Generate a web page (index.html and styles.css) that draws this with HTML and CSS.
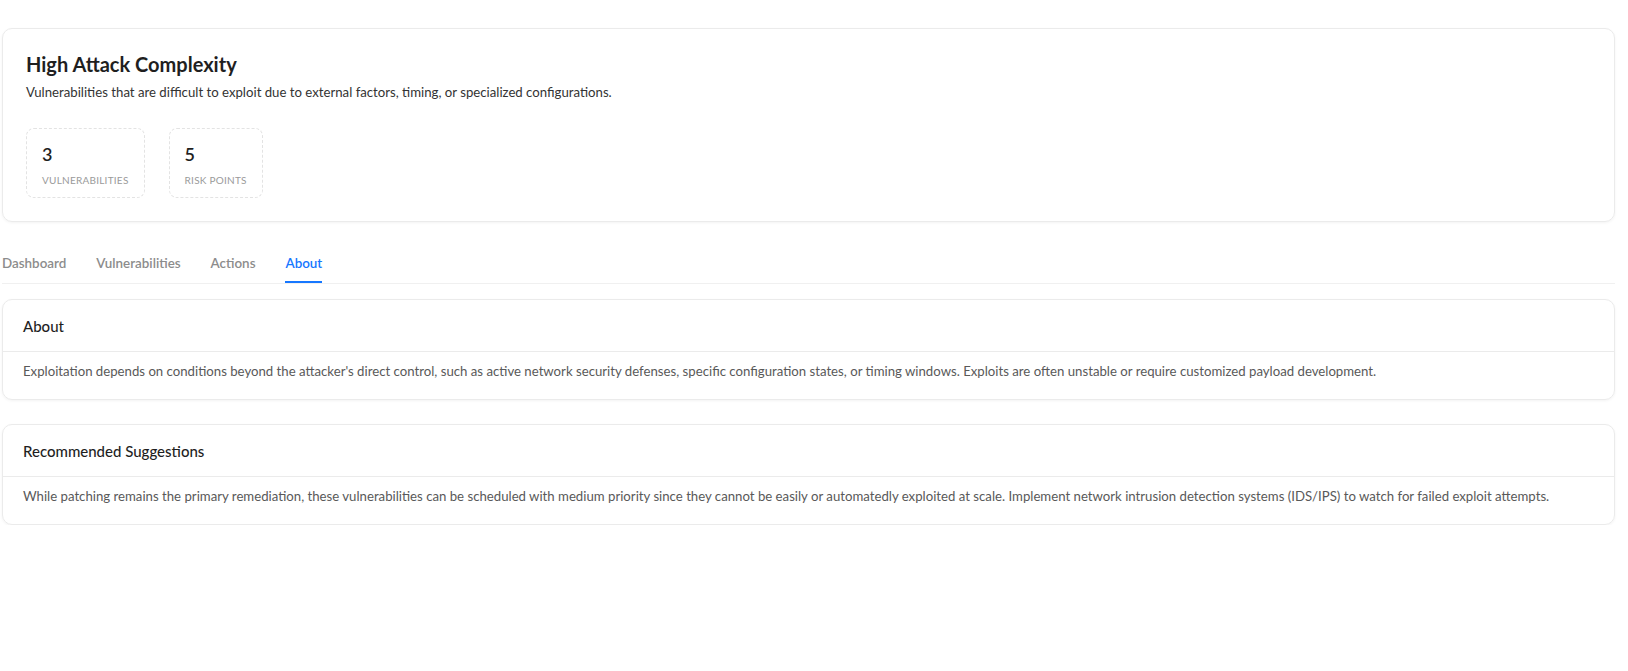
FILE: index.html
```html
<!DOCTYPE html>
<html lang="en">
<head>
    <meta charset="UTF-8">
    <meta name="viewport" content="width=device-width, initial-scale=1.0">
    <title>High Attack Complexity</title>
    <link rel="stylesheet" href="styles.css">
</head>
<body>
    <div class="page">
        <!-- Resumen de la categoria -->
        <section class="summary-card">
            <h1 class="summary-title">High Attack Complexity</h1>
            <p class="summary-text">Vulnerabilities that are difficult to exploit due to external factors, timing, or specialized configurations.</p>
            <div class="stats">
                <div class="stat-box">
                    <div class="stat-value">3</div>
                    <div class="stat-label">Vulnerabilities</div>
                </div>
                <div class="stat-box">
                    <div class="stat-value">5</div>
                    <div class="stat-label">Risk Points</div>
                </div>
            </div>
        </section>

        <!-- Pestanas -->
        <nav class="tabs">
            <a href="#" class="tab">Dashboard</a>
            <a href="#" class="tab">Vulnerabilities</a>
            <a href="#" class="tab">Actions</a>
            <a href="#" class="tab active">About</a>
        </nav>

        <section class="info-card">
            <div class="info-head">About</div>
            <div class="info-body">Exploitation depends on conditions beyond the attacker's direct control, such as active network security defenses, specific configuration states, or timing windows. Exploits are often unstable or require customized payload development.</div>
        </section>

        <section class="info-card">
            <div class="info-head">Recommended Suggestions</div>
            <div class="info-body">While patching remains the primary remediation, these vulnerabilities can be scheduled with medium priority since they cannot be easily or automatedly exploited at scale. Implement network intrusion detection systems (IDS/IPS) to watch for failed exploit attempts.</div>
        </section>
    </div>
</body>
</html>
```

FILE: styles.css
```css
html, body {
    margin: 0;
    padding: 0;
    background: #fff;
    font-family: 'Segoe UI', 'Lato', sans-serif;
    color: #1f1f1f;
}

.page {
    width: 1613px;
    margin-left: 2px;
    padding-top: 28px;
}

.summary-card {
    border: 1px solid #ebebeb;
    border-radius: 10px;
    box-shadow: 0 1px 3px rgba(0, 0, 0, 0.05);
    padding: 21px 23px 23px;
}

.summary-title {
    margin: 0;
    font-size: 20px;
    line-height: 28px;
    font-weight: 700;
    color: #1f1f1f;
}

.summary-text {
    margin: 4px 0 0;
    font-size: 13.2px;
    line-height: 20px;
    color: #333;
}

.stats {
    display: flex;
    gap: 24px;
    margin-top: 26px;
}

.stat-box {
    border: 1px dashed #e3e3e3;
    border-radius: 8px;
    padding: 13px 15px 10px;
}

.stat-value {
    font-size: 18px;
    line-height: 24px;
    font-weight: 600;
    color: #1f1f1f;
}

.stat-label {
    margin-top: 7px;
    font-size: 10px;
    line-height: 14px;
    letter-spacing: 0.25px;
    text-transform: uppercase;
    color: #9a9a9a;
}

.tabs {
    display: flex;
    gap: 30px;
    margin-top: 17px;
    border-bottom: 1px solid #f0f0f0;
}

.tab {
    padding: 13px 0 7px;
    font-size: 13.4px;
    line-height: 22px;
    font-weight: 600;
    color: #8c8c8c;
    text-decoration: none;
    border-bottom: 2px solid transparent;
}

.tab.active {
    color: #1677ff;
    border-bottom-color: #1677ff;
}

.info-card {
    margin-top: 15px;
    border: 1px solid #ebebeb;
    border-radius: 10px;
    box-shadow: 0 1px 3px rgba(0, 0, 0, 0.05);
}

.info-card + .info-card {
    margin-top: 24px;
}

.info-head {
    display: flex;
    align-items: center;
    height: 51px;
    padding: 0 20px;
    border-bottom: 1px solid #ebebeb;
    font-size: 15px;
    font-weight: 500;
    color: #1f1f1f;
}

.info-body {
    padding: 8px 20px 17px;
    font-size: 13.2px;
    line-height: 22px;
    color: #595959;
}
```
